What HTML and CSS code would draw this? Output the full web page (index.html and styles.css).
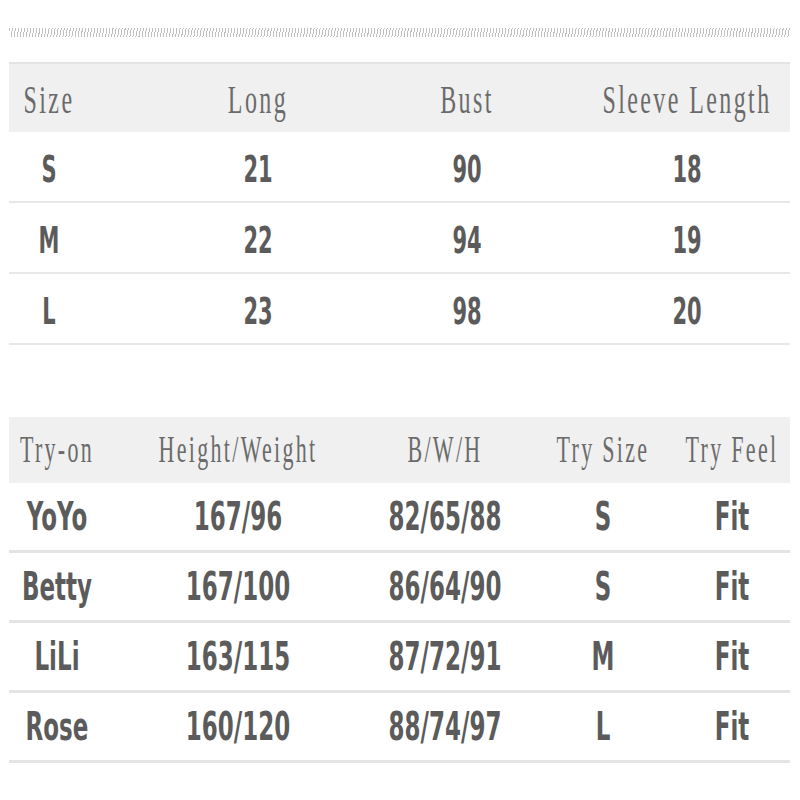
FILE: index.html
```html
<!DOCTYPE html>
<html>
<head>
<meta charset="utf-8">
<link rel="stylesheet" href="styles.css">
</head>
<body>
<div class="page">
  <div class="wave"></div>

  <div class="chart size-chart">
    <div class="row head">
      <div class="cell"><span class="h">Size</span></div>
      <div class="cell"><span class="h">Long</span></div>
      <div class="cell"><span class="h">Bust</span></div>
      <div class="cell c4"><span class="h">Sleeve Length</span></div>
    </div>
    <div class="row">
      <div class="cell"><span class="v">S</span></div>
      <div class="cell"><span class="v">21</span></div>
      <div class="cell"><span class="v">90</span></div>
      <div class="cell c4"><span class="v">18</span></div>
    </div>
    <div class="row">
      <div class="cell"><span class="v">M</span></div>
      <div class="cell"><span class="v">22</span></div>
      <div class="cell"><span class="v">94</span></div>
      <div class="cell c4"><span class="v">19</span></div>
    </div>
    <div class="row">
      <div class="cell"><span class="v">L</span></div>
      <div class="cell"><span class="v">23</span></div>
      <div class="cell"><span class="v">98</span></div>
      <div class="cell c4"><span class="v">20</span></div>
    </div>
  </div>

  <div class="chart try-chart">
    <div class="row head">
      <div class="cell"><span class="h">Try-on</span></div>
      <div class="cell"><span class="h">Height/Weight</span></div>
      <div class="cell"><span class="h">B/W/H</span></div>
      <div class="cell"><span class="h">Try Size</span></div>
      <div class="cell"><span class="h">Try Feel</span></div>
    </div>
    <div class="row">
      <div class="cell"><span class="v">YoYo</span></div>
      <div class="cell"><span class="v">167/96</span></div>
      <div class="cell"><span class="v">82/65/88</span></div>
      <div class="cell"><span class="v">S</span></div>
      <div class="cell"><span class="v">Fit</span></div>
    </div>
    <div class="row">
      <div class="cell"><span class="v">Betty</span></div>
      <div class="cell"><span class="v">167/100</span></div>
      <div class="cell"><span class="v">86/64/90</span></div>
      <div class="cell"><span class="v">S</span></div>
      <div class="cell"><span class="v">Fit</span></div>
    </div>
    <div class="row">
      <div class="cell"><span class="v">LiLi</span></div>
      <div class="cell"><span class="v">163/115</span></div>
      <div class="cell"><span class="v">87/72/91</span></div>
      <div class="cell"><span class="v">M</span></div>
      <div class="cell"><span class="v">Fit</span></div>
    </div>
    <div class="row">
      <div class="cell"><span class="v">Rose</span></div>
      <div class="cell"><span class="v">160/120</span></div>
      <div class="cell"><span class="v">88/74/97</span></div>
      <div class="cell"><span class="v">L</span></div>
      <div class="cell"><span class="v">Fit</span></div>
    </div>
  </div>
</div>
</body>
</html>
```

FILE: styles.css
```css
* { box-sizing: border-box; }

body {
  margin: 0;
  background: #ffffff;
  width: 800px;
  height: 800px;
  overflow: hidden;
}

.page {
  padding: 28px 10px 0 9px;
  display: flex;
  flex-direction: column;
}

.wave {
  height: 9px;
  background: repeating-linear-gradient(100deg, #b8b8b8 0 1px, transparent 1px 3px);
  opacity: 0.9;
}

.chart {
  display: flex;
  flex-direction: column;
}

.row {
  display: grid;
  align-items: center;
  justify-items: center;
}

.cell {
  display: flex;
  justify-content: center;
  align-items: center;
  width: 100%;
}

.h {
  display: inline-block;
  font-family: "Liberation Serif", serif;
  color: #6b6b6b;
  white-space: pre;
}

.v {
  display: inline-block;
  font-family: "DejaVu Sans", sans-serif;
  font-weight: bold;
  color: #5b5b5b;
  white-space: pre;
}

/* first chart */
.size-chart {
  margin-top: 25px;
}

.size-chart .row {
  grid-template-columns: 80px 338px 80px 283px;
  height: 71px;
  border-bottom: 2px solid #e8e8e8;
}

.size-chart .row.head {
  height: 70px;
  background: #f0f0f0;
  border-top: 2px solid #e4e4e4;
  border-bottom: none;
}

.size-chart .c4 {
  padding-left: 77px;
}

.size-chart .h {
  font-size: 24px;
  letter-spacing: 2.4px;
  transform: translateY(2px) scaleY(1.7);
}

.size-chart .v {
  font-size: 21px;
  transform: translateY(2px) scaleY(1.8);
}

/* second chart */
.try-chart {
  margin-top: 72px;
}

.try-chart .row {
  grid-template-columns: 96px 266px 148px 168px 90px;
  height: 70px;
  border-bottom: 3px solid #e4e4e4;
}

.try-chart .row.head {
  height: 66px;
  background: #f0f0f0;
  border-bottom: none;
}

.try-chart .h {
  font-size: 22px;
  letter-spacing: 2.3px;
  transform: scaleY(1.7);
}

.try-chart .v {
  font-size: 23px;
  transform: scaleY(1.66);
}
```
